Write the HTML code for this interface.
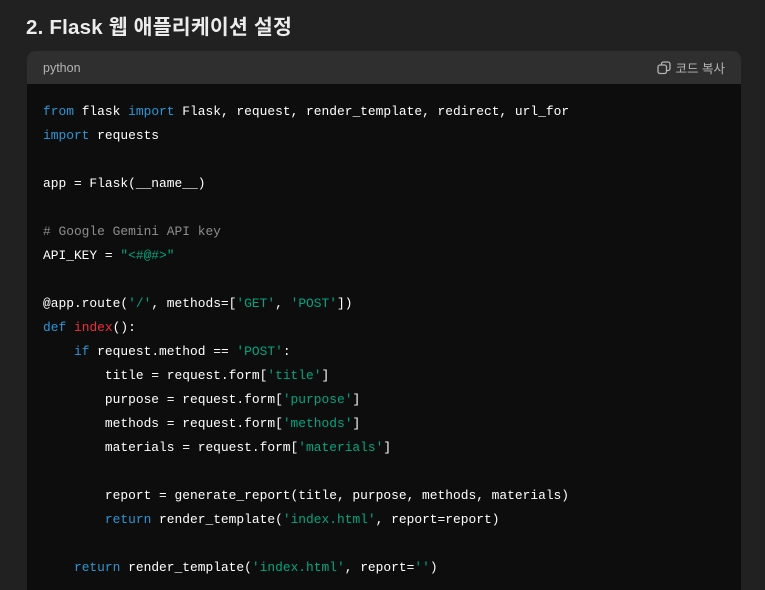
<!DOCTYPE html>
<html><head><meta charset="utf-8"><style>
html,body{margin:0;height:590px;overflow:hidden}
body{background:#212121;width:765px;font-family:"Liberation Sans","Noto Sans CJK KR",sans-serif}
h3{position:absolute;left:26px;top:13px;margin:0;color:#ececec;font-size:20.5px;font-weight:bold;line-height:30px;letter-spacing:0.2px}
.blk{position:absolute;left:27px;top:51px;width:714px;height:539px;border-radius:8px 8px 0 0;overflow:hidden;background:#0d0d0d}
.hd{height:33px;background:#2f2f2f;color:#b4b4b4;font-size:12.5px;display:flex;align-items:center;justify-content:space-between;padding:0 16px}
.cp{display:flex;align-items:center;gap:5px}
pre{margin:0;padding:16px 16px;font-family:"Liberation Mono",monospace;font-size:12.9px;line-height:24px;color:#fff}
.k{color:#2e95d3}.s{color:#00a67d}.f{color:#f22c3d}.c{color:#8d8d8d}
</style></head><body>
<h3>2. Flask 웹 애플리케이션 설정</h3>
<div class="blk"><div class="hd"><span>python</span><span class="cp"><svg width="14" height="14" viewBox="0 0 14 14" fill="none" stroke="#b4b4b4" stroke-width="1.3"><rect x="1" y="4" width="8.5" height="8.5" rx="2"/><path d="M4.5 4V3a2 2 0 0 1 2-2H11a2 2 0 0 1 2 2v4.5a2 2 0 0 1-2 2H9.5"/></svg>코드 복사</span></div>
<pre><span class="k">from</span> flask <span class="k">import</span> Flask, request, render_template, redirect, url_for
<span class="k">import</span> requests

app = Flask(__name__)

<span class="c"># Google Gemini API key</span>
API_KEY = <span class="s">"&lt;#@#&gt;"</span>

@app.route(<span class="s">'/'</span>, methods=[<span class="s">'GET'</span>, <span class="s">'POST'</span>])
<span class="k">def</span> <span class="f">index</span>():
    <span class="k">if</span> request.method == <span class="s">'POST'</span>:
        title = request.form[<span class="s">'title'</span>]
        purpose = request.form[<span class="s">'purpose'</span>]
        methods = request.form[<span class="s">'methods'</span>]
        materials = request.form[<span class="s">'materials'</span>]

        report = generate_report(title, purpose, methods, materials)
        <span class="k">return</span> render_template(<span class="s">'index.html'</span>, report=report)

    <span class="k">return</span> render_template(<span class="s">'index.html'</span>, report=<span class="s">''</span>)
</pre></div>
</body></html>
